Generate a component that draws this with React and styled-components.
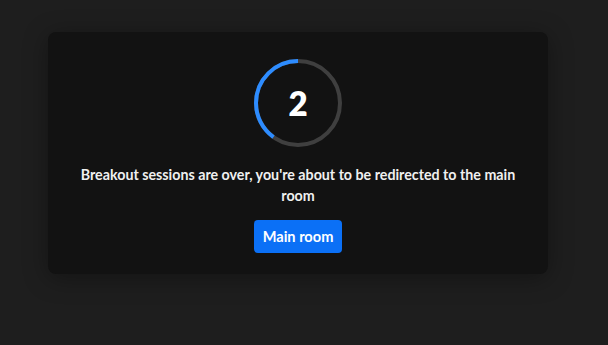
import React from "react";
import styled, { createGlobalStyle } from "styled-components";

const Global = createGlobalStyle`
  html, body { margin: 0; padding: 0; background: #1e1e1e; }
  body { font-family: Lato, "Noto Sans", sans-serif; }
`;

const Page = styled.div`
  width: 608px;
  height: 345px;
  background: #1e1e1e;
  padding: 32px 0 0 48px;
  box-sizing: border-box;
`;

const Card = styled.div`
  width: 500px;
  box-sizing: border-box;
  background: #121212;
  border-radius: 8px;
  box-shadow: 0 4px 24px rgba(0, 0, 0, 0.35);
  padding: 27px 24px 21px;
  display: flex;
  flex-direction: column;
  align-items: center;
`;

const Timer = styled.div`
  position: relative;
  width: 88px;
  height: 88px;
  display: flex;
  align-items: center;
  justify-content: center;
`;

const Ring = styled.svg`
  position: absolute;
  inset: 0;
`;

const Count = styled.span`
  position: relative;
  color: #ffffff;
  font-weight: 800;
  font-size: 33px;
`;

const Message = styled.p`
  margin: 17px 0 0;
  color: #f0f0f0;
  font-weight: 700;
  font-size: 14.25px;
  line-height: 21px;
  text-align: center;
`;

const Button = styled.button`
  margin-top: 14px;
  height: 33px;
  padding: 0 8.5px;
  border: none;
  border-radius: 4px;
  background: #0b70f6;
  color: #fff;
  font-family: Lato, "Noto Sans", sans-serif;
  font-weight: 700;
  font-size: 14.6px;
  cursor: pointer;
`;

export default function App() {
  const r = 42;
  const c = 2 * Math.PI * r;
  const frac = 0.4;
  return (
    <>
      <Global />
      <Page>
        <Card>
          <Timer>
            <Ring width="88" height="88" viewBox="0 0 88 88">
              <circle cx="44" cy="44" r={r} fill="none" stroke="#3f3f3f" strokeWidth="4" />
              <circle
                cx="44"
                cy="44"
                r={r}
                fill="none"
                stroke="#2d8cff"
                strokeWidth="4"
                strokeDasharray={`${c * frac} ${c}`}
                transform="translate(88 0) scale(-1 1) rotate(-90 44 44)"
              />
            </Ring>
            <Count>2</Count>
          </Timer>
          <Message>Breakout sessions are over, you're about to be redirected to the main room</Message>
          <Button>Main room</Button>
        </Card>
      </Page>
    </>
  );
}
